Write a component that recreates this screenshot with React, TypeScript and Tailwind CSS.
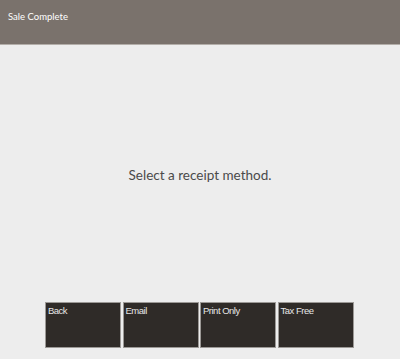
export default function App() {
  const buttons = ["Back", "Email", "Print Only", "Tax Free"];
  return (
    <div className="w-[400px] h-[359px] flex flex-col bg-[#ededed] overflow-hidden">
      <div className="h-[45px] shrink-0 bg-[#7a726c] border-b border-[#b3aea9] px-[8px] pt-[4px] leading-[20px]">
        <span className="text-[9.5px] text-white" style={{ fontFamily: 'Lato, sans-serif' }}>
          Sale Complete
        </span>
      </div>
      <div className="flex-1 flex items-center justify-center pt-[10px]">
        <span className="text-[13.5px] text-[#4a4a4a]" style={{ fontFamily: 'Lato, sans-serif' }}>
          Select a receipt method.
        </span>
      </div>
      <div className="flex gap-[1.5px] pl-[45px] pb-[11px] pt-[7px]">
        {buttons.map((b) => (
          <div
            key={b}
            className="w-[76px] h-[46px] bg-[#2f2b28] border border-[#9c9996] px-[2px] pt-[1px] text-[9.5px] tracking-[-0.5px] text-[#e6e6e6] leading-[13px]"
            style={{ fontFamily: '"Liberation Sans", Arial, sans-serif' }}
          >
            {b}
          </div>
        ))}
      </div>
    </div>
  );
}
